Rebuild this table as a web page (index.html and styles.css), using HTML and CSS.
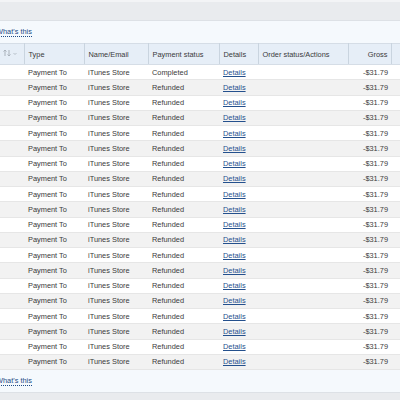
FILE: index.html
```html
<!DOCTYPE html>
<html lang="en">
<head>
    <meta charset="UTF-8">
    <title>Activity</title>
    <link rel="stylesheet" href="styles.css">
</head>
<body>

    <div class="topbar"><span class="cut">Filter</span></div>

    <div class="helpbar"><a class="help" href="#">What's this</a></div>

    <table class="activity">
        <thead>
            <tr>
                <th class="c-sel">
                    <svg width="14" height="8" viewBox="0 0 14 8">
                        <path d="M2 7V1M0.5 2.5L2 1l1.5 1.5M6 1v6M4.5 5.5L6 7l1.5-1.5" stroke="#aab2bb" stroke-width="1" fill="none"/>
                        <path d="M10.5 4l1.5 1.5L13.5 4" stroke="#aab2bb" stroke-width="0.8" fill="none"/>
                    </svg>
                </th>
                <th class="c-type">Type</th>
                <th class="c-name">Name/Email</th>
                <th class="c-status">Payment status</th>
                <th class="c-det">Details</th>
                <th class="c-order">Order status/Actions</th>
                <th class="c-gross">Gross</th>
                <th class="c-rest"></th>
            </tr>
        </thead>
        <tbody id="rows"></tbody>
    </table>

    <div class="helpbar"><a class="help" href="#">What's this</a></div>

    <div class="topbar bottom"></div>

    <script>
        const tbody = document.getElementById('rows');
        for (let i = 0; i < 20; i++) {
            const status = i === 0 ? 'Completed' : 'Refunded';
            const tr = document.createElement('tr');
            tr.innerHTML = `
                <td></td>
                <td>Payment To</td>
                <td>iTunes Store</td>
                <td>${status}</td>
                <td><a href="#">Details</a></td>
                <td></td>
                <td class="c-gross">-$31.79</td>
                <td></td>
            `;
            tbody.appendChild(tr);
        }
    </script>

</body>
</html>
```

FILE: styles.css
```css
body {
    margin: 0;
    font-family: "Liberation Sans", Arial, sans-serif;
    font-size: 7.4px;
    color: #3a3a3a;
    background: #fff;
    overflow: hidden;
}
.topbar {
    height: 21px;
    background: #e9ebee;
    border-top: 2px solid #f3f4f6;
    box-sizing: border-box;
    border-bottom: 1px solid #dde1e6;
    line-height: 18px;
}
.topbar .cut {
    margin-left: -20px;
    color: #333;
    font-size: 8px;
}
.topbar.bottom {
    height: 12px;
    border-top: 1px solid #dde1e6;
    border-bottom: none;
}
.helpbar {
    height: 22px;
    background: #f5f9fd;
    line-height: 22px;
}
.help {
    margin-left: -4px;
    color: #1d4a86;
    text-decoration: none;
    border-bottom: 1px dotted #1d4a86;
}
.activity {
    border-collapse: collapse;
    width: 420px;
    table-layout: fixed;
}
.activity th {
    height: 21px;
    background: #e6eef7;
    font-weight: normal;
    text-align: left;
    padding: 0 4px;
    border-left: 1px solid #fff;
    border-right: 1px solid #c9d4df;
    border-top: 1px solid #d5dde6;
    border-bottom: 1px solid #d5dde6;
    box-sizing: border-box;
}
.activity th.c-sel {
    border-left: none;
    padding: 0 0 0 3px;
}
.activity td {
    height: 15.25px;
    padding: 0 4px;
    border-bottom: 1px solid #e6e6e6;
    box-sizing: border-box;
    white-space: nowrap;
}
.activity tbody tr:nth-child(even) td {
    background: #f2f2f2;
}
.activity td a {
    color: #24508d;
}
.activity .c-gross {
    text-align: right;
    padding-right: 3px;
}
.c-sel { width: 24px; }
.c-type { width: 60px; }
.c-name { width: 64px; }
.c-status { width: 71px; }
.c-det { width: 39px; }
.c-order { width: 90px; }
.c-gross { width: 43px; }
.c-rest { width: 29px; }
```
